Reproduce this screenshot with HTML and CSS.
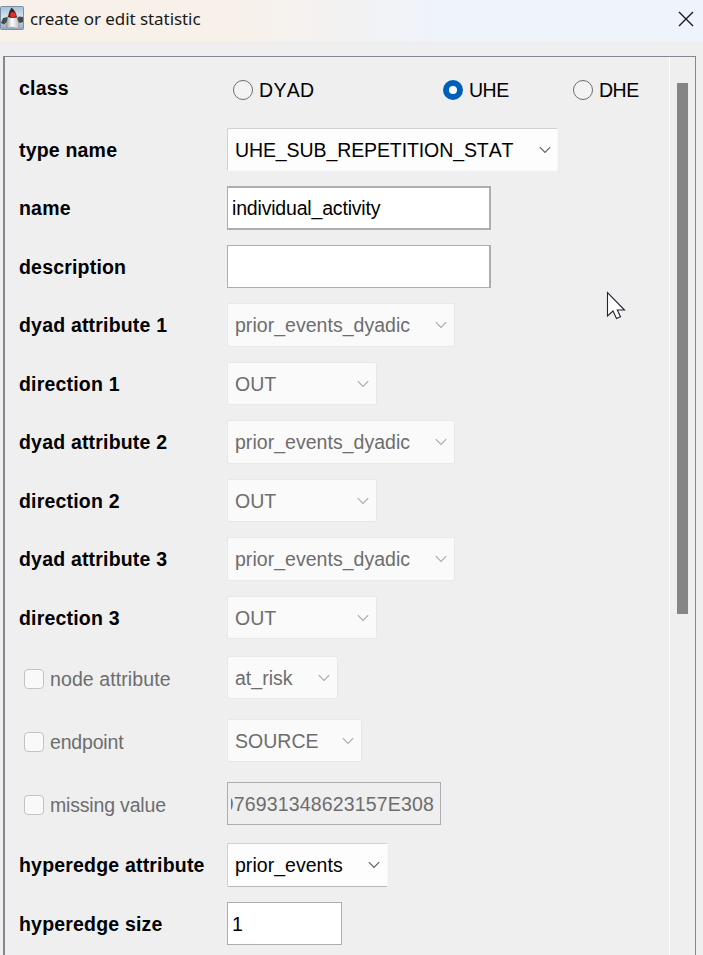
FILE: index.html
```html
<!DOCTYPE html>
<html lang="en">
<head>
<meta charset="utf-8">
<title>create or edit statistic</title>
<link rel="stylesheet" href="styles.css">
</head>
<body>
<svg class="defs" aria-hidden="true"><symbol id="chev" viewBox="0 0 12 8"><path d="M.8 1.2 6 6.4 11.2 1.2" fill="none" stroke="currentColor" stroke-width="1.1"/></symbol></svg>
<header class="titlebar">
  <svg class="app-icon" viewBox="0 0 24 24">
    <defs><linearGradient id="sky" x1="0" y1="0" x2="0" y2="1"><stop offset="0" stop-color="#a9bfd2"/><stop offset=".5" stop-color="#dce6ef"/><stop offset="1" stop-color="#8da8c0"/></linearGradient>
    <linearGradient id="belly" x1="0" y1="0" x2="1" y2="0"><stop offset="0" stop-color="#999"/><stop offset=".45" stop-color="#fff"/><stop offset="1" stop-color="#bbb"/></linearGradient></defs>
    <rect x=".5" y=".5" width="23" height="23" rx="1" fill="url(#sky)" stroke="#7890a5"/>
    <path d="M8 11 3 12 1 17 4 18.500 8 15M16 13 19 10.500 23 11 23 16 20 17 17 15" fill="#48494c"/>
    <path d="M8 10 6 20Q6 22.500 9 22L12 21 17 22.500Q20 22 19 18L16.500 10Z" fill="url(#belly)" stroke="#888" stroke-width=".5"/>
    <path d="M11.500 1.500Q9 5 8 11 12 12.500 17 11.500 16 5 11.500 1.500Z" fill="#29292c"/>
    <circle cx="13" cy="8.800" r="2.900" fill="#e92a25"/>
  </svg>
  <span class="title">create or edit statistic</span>
  <svg class="close" viewBox="0 0 16 16"><path d="M1 1 15 15M15 1 1 15" stroke="#1a1a1a" stroke-width="1.4"/></svg>
</header>
<main class="frame">
  <section class="form">
    <div class="row row-class"><span class="label">class</span>
      <div class="radios">
        <span class="radio"><i></i>DYAD</span><span class="radio on"><i></i>UHE</span><span class="radio"><i></i>DHE</span>
      </div>
    </div>
    <div class="row"><span class="label">type name</span><div class="combo w331 ready flat">UHE_SUB_REPETITION_STAT<svg><use href="#chev"/></svg></div></div>
    <div class="row tall"><span class="label">name</span><div class="field w264 thick">individual_activity</div></div>
    <div class="row"><span class="label">description</span><div class="field w264 edge"></div></div>
    <div class="row tall"><span class="label">dyad attribute 1</span><div class="combo w228">prior_events_dyadic<svg><use href="#chev"/></svg></div></div>
    <div class="row"><span class="label">direction 1</span><div class="combo w150">OUT<svg><use href="#chev"/></svg></div></div>
    <div class="row tall"><span class="label">dyad attribute 2</span><div class="combo w228">prior_events_dyadic<svg><use href="#chev"/></svg></div></div>
    <div class="row"><span class="label">direction 2</span><div class="combo w150">OUT<svg><use href="#chev"/></svg></div></div>
    <div class="row tall"><span class="label">dyad attribute 3</span><div class="combo w228">prior_events_dyadic<svg><use href="#chev"/></svg></div></div>
    <div class="row h60"><span class="label">direction 3</span><div class="combo w150">OUT<svg><use href="#chev"/></svg></div></div>
    <div class="row h63"><span class="check"><i></i>node attribute</span><div class="combo w111">at_risk<svg><use href="#chev"/></svg></div></div>
    <div class="row h63"><span class="check tight"><i></i>endpoint</span><div class="combo w135">SOURCE<svg><use href="#chev"/></svg></div></div>
    <div class="row h61"><span class="check tight"><i></i>missing value</span><div class="field w214 off"><span class="clip">976931348623157E308</span></div></div>
    <div class="row tall"><span class="label">hyperedge attribute</span><div class="combo w161 ready">prior_events<svg><use href="#chev"/></svg></div></div>
    <div class="row"><span class="label">hyperedge size</span><div class="field w115">1</div></div>
  </section>
  <aside class="scroll"><div class="thumb"></div></aside>
</main>
<svg class="cursor" viewBox="0 0 20 29"><path d="M1.500 1.500V25L7 20 10.500 27.500 14.500 25.800 11.300 19H18.500Z" fill="#fff" stroke="#222233" stroke-width="1.100"/></svg>
</body>
</html>
```
FILE: styles.css
```css
* { box-sizing: border-box; }
body {
  margin: 0; height: 955px; overflow: hidden; background: #efefef; color: #000;
  font: 19.500px/45px "Liberation Sans", Arial, sans-serif; font-kerning: none;
  display: flex; flex-direction: column;
}
.defs { position: absolute; width: 0; height: 0; }
.titlebar {
  height: 41px; flex: none; display: flex; align-items: center; padding-right: 9px;
  background: linear-gradient(90deg, #f8f1ea 0, #f8f1e9 32%, #eff3fa 62%, #eff3fb 100%);
}
.app-icon { width: 24px; height: 24px; margin-top: -5px; }
.title { font: 17px/24px "Noto Sans", sans-serif; letter-spacing: -.06px; margin: -4px 0 0 6px; color: #191919; }
.close { width: 16px; height: 16px; margin: -4px 0 0 auto; }
.frame {
  flex: none; height: 920px; margin: 15px 7px 0 3px; display: flex;
  border: 1px solid #858790; border-left-width: 2px;
}
.form { flex: 1; min-width: 0; padding-left: 14px; }
.row { display: flex; height: 58px; align-items: flex-start; white-space: nowrap; }
.row.tall { height: 59px; }
.row-class { height: 71px; }
.h60 { height: 60px; }
.h61 { height: 61px; }
.h63 { height: 63px; }
.label { flex: none; width: 208px; font-weight: bold; letter-spacing: .19px; }
.row-class .label { padding-top: 9px; }
.radios { display: flex; padding: 11px 0 0 6px; }
.radio { flex: none; display: flex; align-items: center; width: 130px; height: 44px; letter-spacing: -.5px; }
.radio:first-child { width: 210px; letter-spacing: .3px; }
.radio:last-child { width: auto; }
.radio i { width: 20px; height: 20px; border: 1px solid #6d6d6d; border-radius: 50%; margin-right: 6px; background: #f3f3f3; }
.radio.on i { border: 6px solid #005fb8; background: #fff; }
.combo {
  height: 43px; line-height: 42px; display: flex; align-items: center; justify-content: space-between;
  padding: 1px 7px 0 7px; background: #fafafa; color: #6d6d6d; border: 1px solid #e8e8e8;
  border-radius: 2px; letter-spacing: .03px;
}
.tall .combo, .tall .field { height: 44px; }
.tall .combo { padding-top: 0; line-height: 41px; }
.combo svg { width: 12px; height: 8px; color: #a9a9a9; margin-top: -1px; }
.ready { background: #fdfdfd; color: #000; border-color: #d0d0d0 #f8f8f8 #b9b9b9 #d0d0d0; }
.ready svg { color: #5c5c5c; }
.flat { border-bottom-color: #fafafa; letter-spacing: -.1px; }
.field { height: 43px; border: 1px solid #abadb3; background: #fff; padding-left: 4px; line-height: 43px; }
.thick { border-width: 2px 2px 2px 1px; line-height: 41px; letter-spacing: -.18px; }
.edge { border-right-width: 2px; }
.off { background: #efefef; color: #6d6d6d; padding: 0 6px 0 3px; letter-spacing: .16px; }
.clip { display: flex; justify-content: flex-end; overflow: hidden; }
.w331 { width: 331px; }
.w264 { width: 264px; }
.w228 { width: 228px; }
.w150 { width: 150px; }
.w111 { width: 111px; }
.w135 { width: 135px; }
.w214 { width: 214px; }
.w161 { width: 161px; }
.w115 { width: 115px; }
.flat { padding-right: 6px; }
.check { flex: none; width: 208px; height: 46px; display: flex; align-items: center; padding-left: 5px; color: #6d6d6d; letter-spacing: .1px; }
.tight { letter-spacing: -.18px; }
.check i { width: 20px; height: 20px; margin-right: 6px; border: 1px solid #c3c3c3; border-radius: 4px; background: #f9f9f9; }
.scroll { flex: none; width: 26px; border-left: 1px solid #fff; padding: 26px 0 0 7px; }
.thumb { width: 11px; height: 531px; background: #868686; }
.cursor { position: absolute; left: 606px; top: 291px; width: 20px; height: 29px; }
```
